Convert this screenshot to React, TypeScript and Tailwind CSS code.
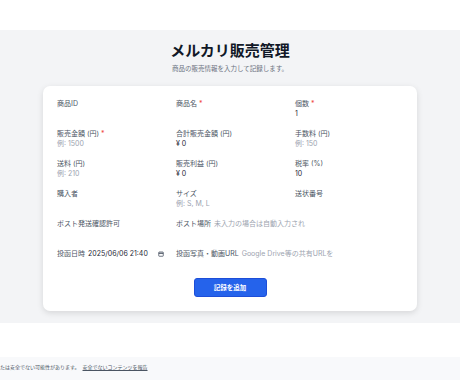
import React from "react";

const Req = () => <span className="text-[#ef4444] ml-[2px]">*</span>;

function Field({ label, value, placeholder, req }: { label: string; value?: string; placeholder?: string; req?: boolean }) {
  return (
    <div className="flex flex-col h-[20px]">
      <div className="leading-[10px] text-[#4b5563]">
        {label}
        {req && <Req />}
      </div>
      {value !== undefined && <div className="leading-[10px] text-[#1f2937]">{value}</div>}
      {placeholder !== undefined && <div className="leading-[10px] text-[#9ca3af]">{placeholder}</div>}
    </div>
  );
}

export default function App() {
  return (
    <div className="w-[460px] h-[380px] bg-white font-['Inter','Noto_Sans_CJK_JP',sans-serif] overflow-hidden flex flex-col">
      <div className="h-[30px] bg-white" />
      <div className="h-[293px] bg-[#f3f4f6] flex flex-col items-center">
        <h1 className="mt-[12px] text-[15px] leading-[18px] font-bold text-[#111827]">メルカリ販売管理</h1>
        <p className="mt-[5px] text-[6.5px] leading-[8px] text-[#6b7280]">商品の販売情報を入力して記録します。</p>
        <div className="mt-[13px] w-[374px] h-[225px] bg-white rounded-[7px] shadow-[0_2px_6px_rgba(0,0,0,0.12)] px-[14px] pt-[13px] pb-[14px] flex flex-col text-[7px]">
          <div className="grid grid-cols-3 gap-x-[11px] gap-y-[10px]">
            <Field label="商品ID" />
            <Field label="商品名" req />
            <Field label="個数" req value="1" />
            <Field label="販売金額 (円)" req placeholder="例: 1500" />
            <Field label="合計販売金額 (円)" value="¥ 0" />
            <Field label="手数料 (円)" placeholder="例: 150" />
            <Field label="送料 (円)" placeholder="例: 210" />
            <Field label="販売利益 (円)" value="¥ 0" />
            <Field label="税率 (%)" value="10" />
            <Field label="購入者" />
            <Field label="サイズ" placeholder="例: S, M, L" />
            <Field label="送状番号" />
            <div className="h-[20px] flex items-start leading-[10px] text-[#4b5563]">ポスト発送確認許可</div>
            <div className="h-[20px] flex items-start leading-[10px] whitespace-nowrap">
              <span className="text-[#4b5563]">ポスト場所</span>
              <span className="ml-[3px] shrink-0 text-[#9ca3af]">未入力の場合は自動入力され</span>
            </div>
            <div className="h-[20px]" />
            <div className="h-[10px] flex items-start leading-[10px] whitespace-nowrap text-[#4b5563]">
              <span className="shrink-0">投函日時</span>
              <span className="ml-[3px] shrink-0 text-[#1f2937]">2025/06/06 21:40</span>
              <svg className="ml-[10px] mt-[2px] shrink-0" width="6" height="6" viewBox="0 0 12 12" fill="none" stroke="#374151" strokeWidth="1.4">
                <rect x="1.5" y="2" width="9" height="8.5" rx="1" />
                <line x1="1.5" y1="4.5" x2="10.5" y2="4.5" strokeWidth="2" />
              </svg>
            </div>
            <div className="h-[10px] flex items-start leading-[10px] whitespace-nowrap">
              <span className="text-[#4b5563]">投函写真・動画URL</span>
              <span className="ml-[3px] shrink-0 text-[#9ca3af]">Google Drive等の共有URLを</span>
            </div>
            <div className="h-[10px]" />
          </div>
          <div className="mt-[19px] flex justify-center">
            <button className="w-[73px] h-[19px] rounded-[3px] bg-[#2563eb] border border-[#1d4ed8] text-white font-bold text-[6.5px] leading-[8px]">
              記録を追加
            </button>
          </div>
        </div>
      </div>
      <div className="h-[34px] bg-white" />
      <div className="flex-1 bg-[#f8f9fb] flex items-center text-[5px] text-[#4b5563] whitespace-nowrap pb-[1px]">
        <span>たは安全でない可能性があります。</span>
        <span className="ml-[3px] underline">安全でないコンテンツを報告</span>
      </div>
    </div>
  );
}
